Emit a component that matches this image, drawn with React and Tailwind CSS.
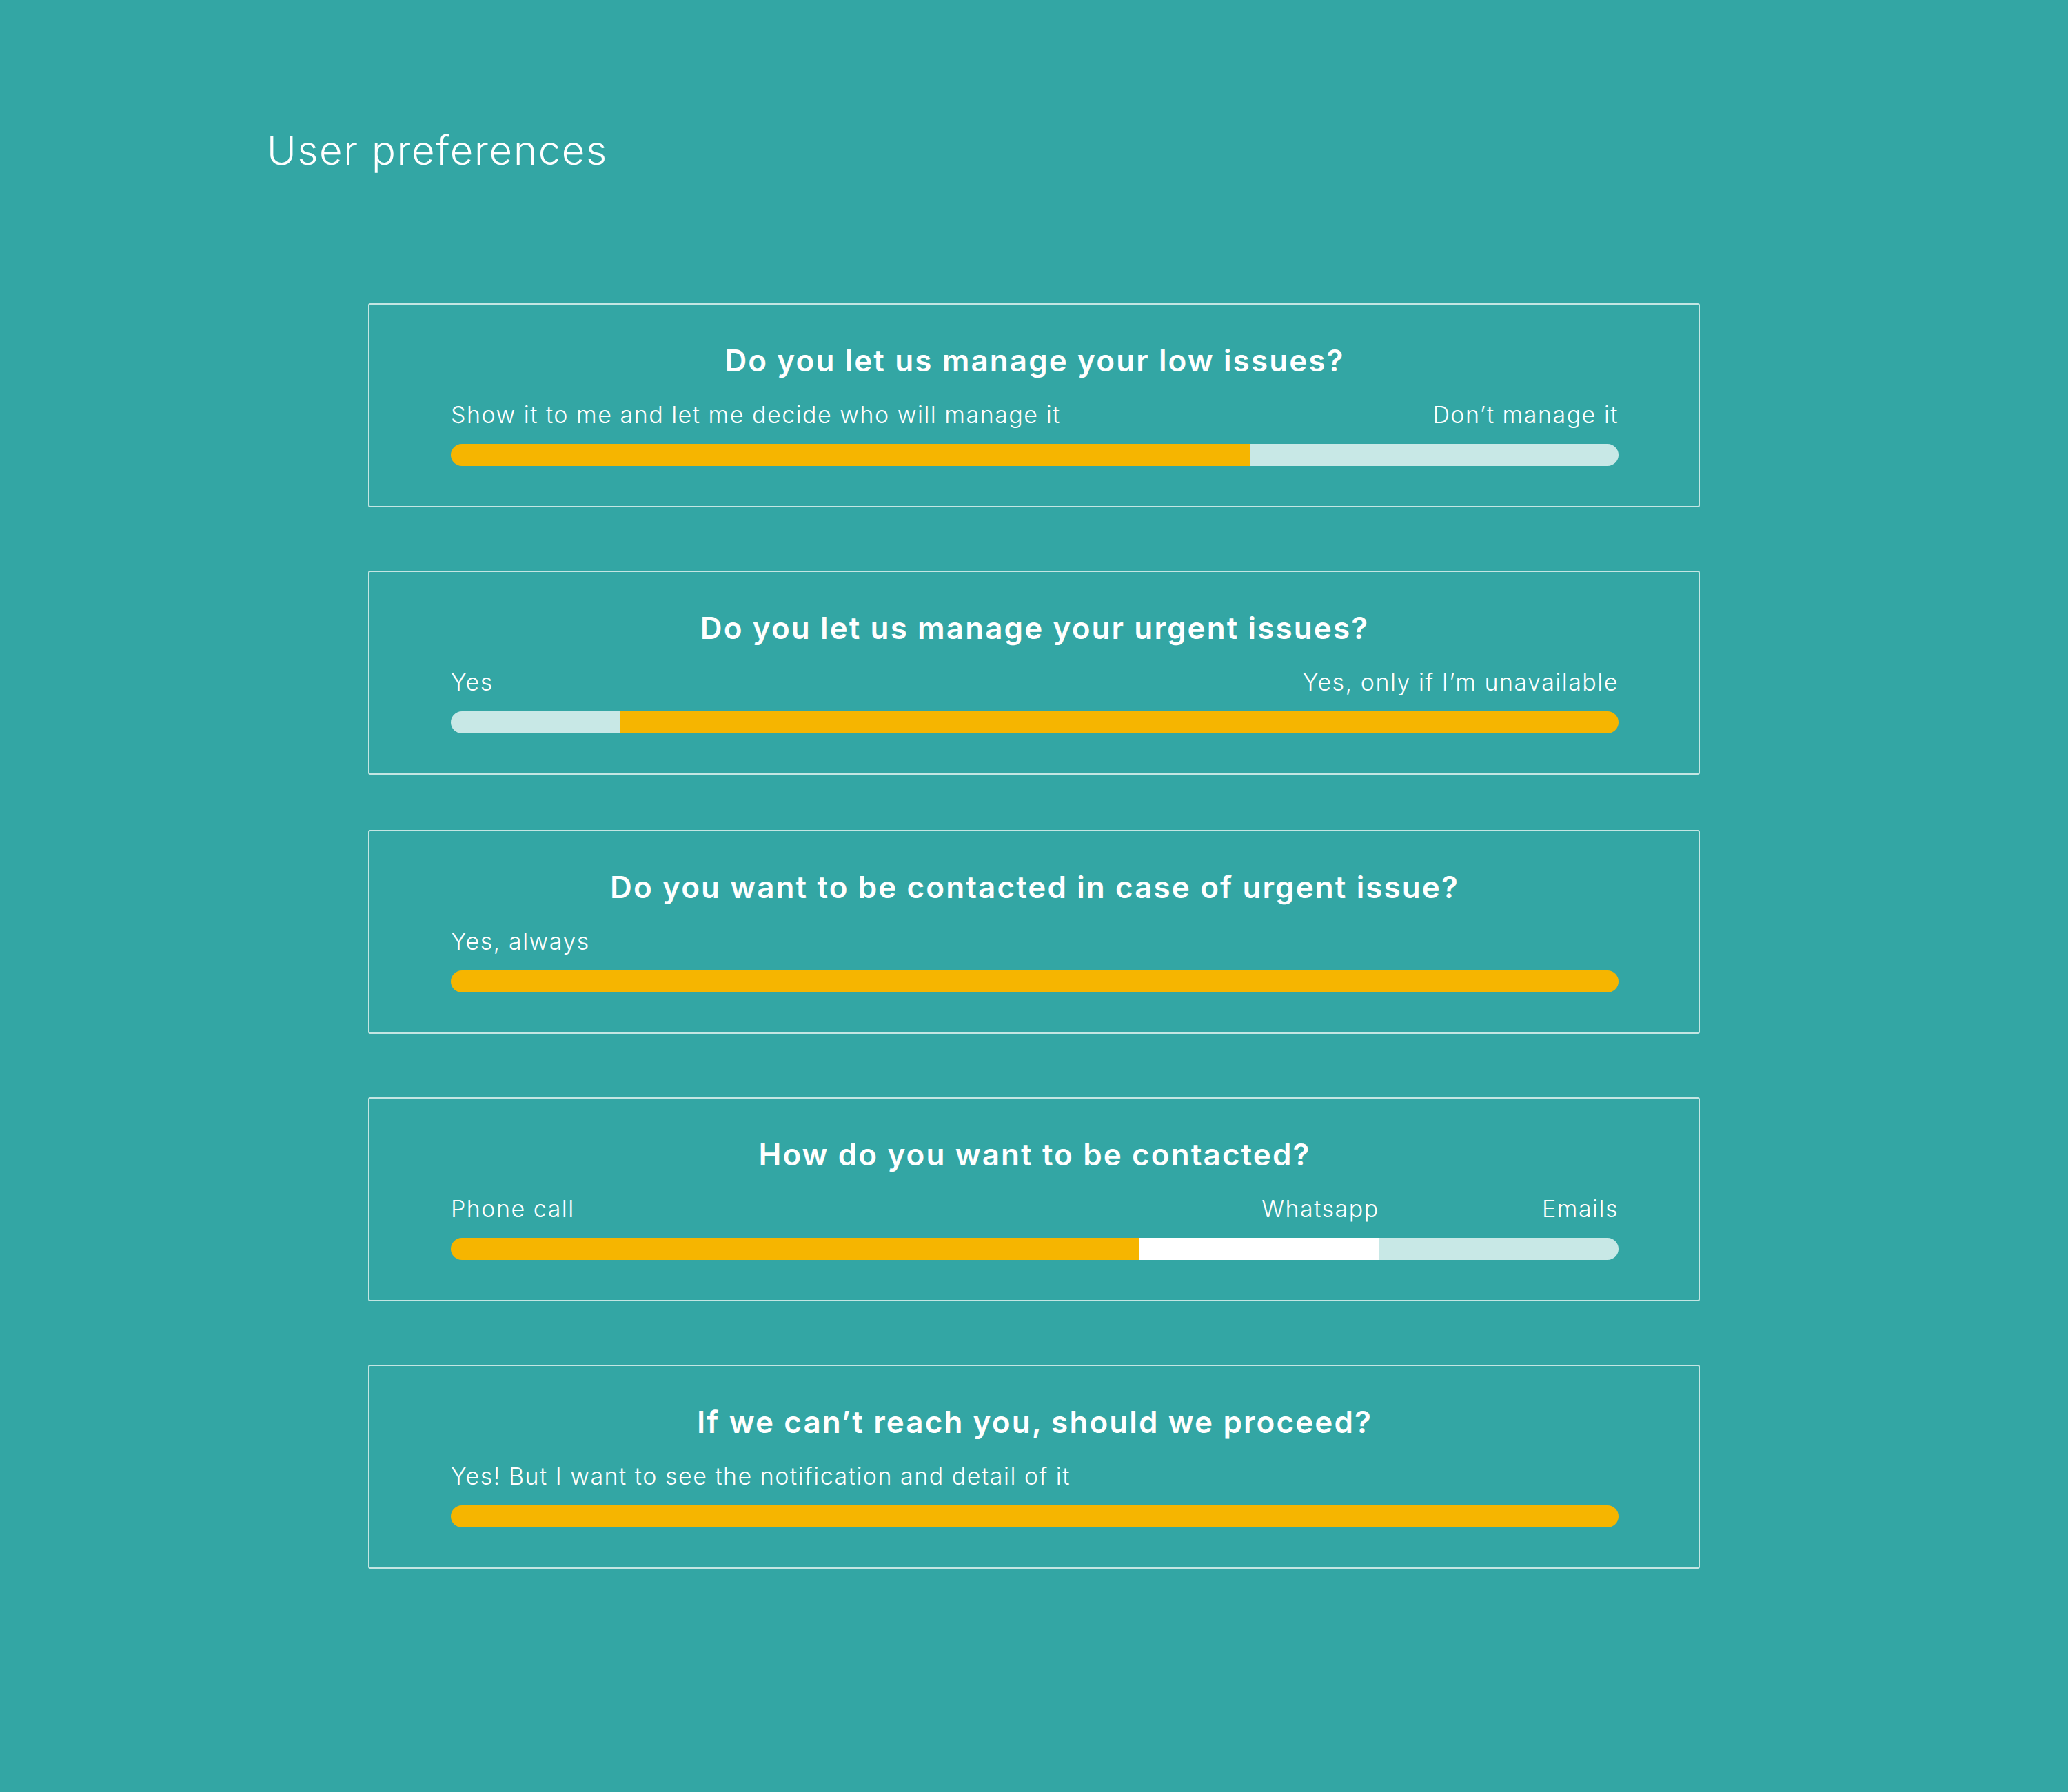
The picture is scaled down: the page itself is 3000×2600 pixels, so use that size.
const YELLOW = 'bg-[#f6b500]';
const PALE = 'bg-[#c8e8e6]';
const WHITE = 'bg-white';

const QUESTIONS = [
  {
    title: 'Do you let us manage your low issues?',
    gap: 'mt-0',
    parts: [
      { label: 'Show it to me and let me decide who will manage it', share: 68.5, color: YELLOW },
      { label: 'Don’t manage it', share: 31.5, color: PALE },
    ],
  },
  {
    title: 'Do you let us manage your urgent issues?',
    gap: 'mt-[92px]',
    parts: [
      { label: 'Yes', share: 14.5, color: PALE },
      { label: 'Yes, only if I’m unavailable', share: 85.5, color: YELLOW },
    ],
  },
  {
    title: 'Do you want to be contacted in case of urgent issue?',
    gap: 'mt-[80px]',
    parts: [{ label: 'Yes, always', share: 100, color: YELLOW }],
  },
  {
    title: 'How do you want to be contacted?',
    gap: 'mt-[92px]',
    parts: [
      { label: 'Phone call', share: 59, color: YELLOW },
      { label: 'Whatsapp', share: 20.5, color: WHITE },
      { label: 'Emails', share: 20.5, color: PALE },
    ],
  },
  {
    title: 'If we can’t reach you, should we proceed?',
    gap: 'mt-[92px]',
    parts: [
      { label: 'Yes! But I want to see the notification and detail of it', share: 100, color: YELLOW },
    ],
  },
];

function QuestionCard({ title, parts, gap }) {
  return (
    <section
      className={`${gap} rounded-[3px] border-2 border-[#c4e6e3] pl-[118px] pr-[116px] pt-[54px] pb-[58px]`}
    >
      <h2 className="text-center text-[44px] leading-[54px] font-semibold tracking-[2.1px]">{title}</h2>

      {/* labels sit over the end of their segment, first one at the start */}
      <div className="mt-[32px] flex h-[40px]">
        {parts.map((p, i) => (
          <div
            key={p.label}
            style={{ width: `${p.share}%` }}
            className={`whitespace-nowrap text-[34px] leading-[40px] font-light tracking-[1.5px] ${i === 0 ? 'text-left' : 'text-right'}`}
          >
            {p.label}
          </div>
        ))}
      </div>

      <div className="mt-[22px] flex h-[32px] overflow-hidden rounded-full">
        {parts.map((p) => (
          <div key={p.label} style={{ width: `${p.share}%` }} className={`h-full ${p.color}`} />
        ))}
      </div>
    </section>
  );
}

export default function App() {
  return (
    <div className="min-h-screen w-full bg-[#33a6a4] font-['Inter',sans-serif] text-white">
      <div className="pt-[183px] pl-[387px]">
        <h1 className="text-[58px] leading-[70px] font-light tracking-[1.7px]">User preferences</h1>
      </div>

      <div className="mx-auto mt-[187px] flex w-[1932px] flex-col pb-[300px]">
        {QUESTIONS.map((q) => (
          <QuestionCard key={q.title} {...q} />
        ))}
      </div>
    </div>
  );
}
